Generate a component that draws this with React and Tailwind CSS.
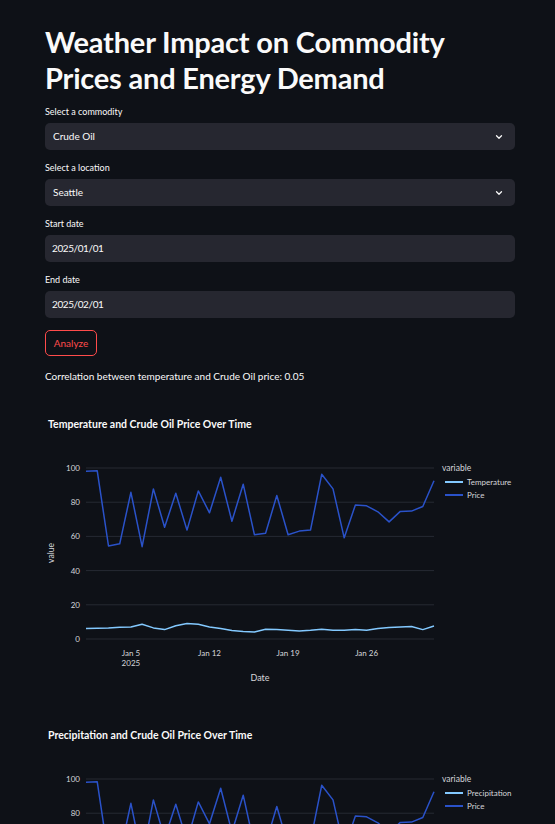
import React from 'react';

const FONT = { fontFamily: 'Lato, "Noto Sans", sans-serif' };

const PRICE = [98.1, 98.4, 54.4, 55.7, 85.8, 54, 87.8, 65.4, 85.2, 63.7, 86.6, 73.8, 94.6, 68.9, 90.5, 61, 61.9, 83.9, 61, 63.1, 63.7, 96.3, 87.8, 59.2, 78.4, 77.9, 74.4, 68.5, 74.6, 74.8, 77.5, 92.6];
const TEMP = [6.1, 6.3, 6.5, 6.9, 7.1, 8.6, 6.5, 5.5, 7.8, 9, 8.6, 7.1, 6.1, 4.9, 4.3, 4.1, 5.7, 5.5, 5.1, 4.7, 5.1, 5.7, 5.1, 5.1, 5.5, 5.1, 6.1, 6.7, 7.1, 7.3, 5.5, 7.6];
const PRECIP = [0.4, 1.2, 0, 0.8, 2.1, 0.3, 0, 1.5, 0.6, 0, 2.4, 0.9, 0.2, 0, 1.1, 3.0, 0.5, 0, 0.7, 1.8, 0.2, 0, 0.4, 1.3, 0.1, 0, 0.9, 2.2, 0.6, 0, 0.3, 1.0];

// plot area, in chart-local pixels
const X0 = 41;
const X1 = 389;
const Y0 = 229;
const PX = 1.71;

const toPath = (arr) =>
    arr
        .map((v, i) => {
            const x = X0 + (i * (X1 - X0)) / 31;
            const y = Y0 - v * PX;
            return `${i === 0 ? 'M' : 'L'}${x.toFixed(1)},${y.toFixed(1)}`;
        })
        .join(' ');

const Chart = ({ title, series }) => {
    const ticks = [0, 20, 40, 60, 80, 100];
    const dates = [
        { label: 'Jan 5', day: 4 },
        { label: 'Jan 12', day: 11 },
        { label: 'Jan 19', day: 18 },
        { label: 'Jan 26', day: 25 },
    ];
    const dayX = (d) => X0 + (d * (X1 - X0)) / 31;

    return (
        <div className="mt-[27px]">
            <svg width="470" height="284" viewBox="0 0 470 284" style={FONT}>
                <text x="3" y="18" fill="#fafafa" fontSize="10.5" fontWeight="700">
                    {title}
                </text>

                {ticks.map((t) => (
                    <g key={t}>
                        <line x1={X0} x2={X1} y1={Y0 - t * PX} y2={Y0 - t * PX} stroke="#262a33" strokeWidth="1" />
                        <text x="35" y={Y0 - t * PX + 3} fill="#d5d6da" fontSize="8" textAnchor="end">
                            {t}
                        </text>
                    </g>
                ))}

                <text
                    x="0"
                    y="0"
                    fill="#d5d6da"
                    fontSize="8.5"
                    textAnchor="middle"
                    transform="translate(9 143) rotate(-90)"
                >
                    value
                </text>

                {dates.map((d) => (
                    <text key={d.label} x={dayX(d.day)} y="246" fill="#d5d6da" fontSize="8" textAnchor="middle">
                        {d.label}
                    </text>
                ))}
                <text x={dayX(4)} y="256" fill="#d5d6da" fontSize="8" textAnchor="middle">
                    2025
                </text>
                <text x="215" y="271" fill="#d5d6da" fontSize="9" textAnchor="middle">
                    Date
                </text>

                {series.map((s) => (
                    <path key={s.name} d={toPath(s.data)} fill="none" stroke={s.color} strokeWidth="1.5" strokeLinejoin="round" />
                ))}

                <text x="397" y="61" fill="#d5d6da" fontSize="8.5">
                    variable
                </text>
                {series.map((s, i) => (
                    <g key={s.name}>
                        <line x1="400" x2="418" y1={72 + i * 13} y2={72 + i * 13} stroke={s.color} strokeWidth="2" />
                        <text x="422" y={75 + i * 13} fill="#d5d6da" fontSize="8">
                            {s.name}
                        </text>
                    </g>
                ))}
            </svg>
        </div>
    );
};

const Label = ({ children, className = '' }) => (
    <p className={`text-[9px] leading-[14px] text-[#fafafa] ${className}`}>{children}</p>
);

const Chevron = () => (
    <svg width="10" height="10" viewBox="0 0 24 24" fill="none" stroke="#fafafa" strokeWidth="3" strokeLinecap="round" strokeLinejoin="round">
        <path d="M6 9l6 6 6-6" />
    </svg>
);

const SelectBox = ({ value }) => (
    <div className="mt-1 h-[27px] rounded-[5px] bg-[#262730] flex items-center justify-between pl-[8px] pr-[11px]">
        <span className="text-[10px] text-[#fafafa]">{value}</span>
        <Chevron />
    </div>
);

const DateBox = ({ value }) => (
    <div className="mt-1 h-[27px] rounded-[5px] bg-[#262730] flex items-center pl-[7px]">
        <span className="text-[10px] tracking-[-0.4px] text-[#fafafa]">{value}</span>
    </div>
);

export default function App() {
    return (
        <div className="h-[824px] bg-[#0e1117] overflow-hidden" style={FONT}>
            <div className="px-[45px] pt-[24px] w-[560px]">
                <h1 className="text-[29px] leading-[36px] font-bold text-[#fafafa] tracking-[-0.2px]">
                    Weather Impact on Commodity Prices and Energy Demand
                </h1>

                <Label className="mt-[9px]">Select a commodity</Label>
                <div className="w-[470px]">
                    <SelectBox value="Crude Oil" />
                </div>

                <Label className="mt-[11px]">Select a location</Label>
                <div className="w-[470px]">
                    <SelectBox value="Seattle" />
                </div>

                <Label className="mt-[11px]">Start date</Label>
                <div className="w-[470px]">
                    <DateBox value="2025/01/01" />
                </div>

                <Label className="mt-[11px]">End date</Label>
                <div className="w-[470px]">
                    <DateBox value="2025/02/01" />
                </div>

                <button className="mt-[12px] h-[26px] w-[52px] rounded-[5px] border border-[#ff4b4b] text-[10px] text-[#ff4b4b] flex items-center justify-center">
                    Analyze
                </button>

                <p className="mt-[13px] text-[10px] leading-[14px] text-[#fafafa]">
                    Correlation between temperature and Crude Oil price: 0.05
                </p>

                <Chart
                    title="Temperature and Crude Oil Price Over Time"
                    series={[
                        { name: 'Temperature', color: '#83c9ff', data: TEMP },
                        { name: 'Price', color: '#2a52c9', data: PRICE },
                    ]}
                />
                <Chart
                    title="Precipitation and Crude Oil Price Over Time"
                    series={[
                        { name: 'Precipitation', color: '#83c9ff', data: PRECIP },
                        { name: 'Price', color: '#2a52c9', data: PRICE },
                    ]}
                />
            </div>
        </div>
    );
}
